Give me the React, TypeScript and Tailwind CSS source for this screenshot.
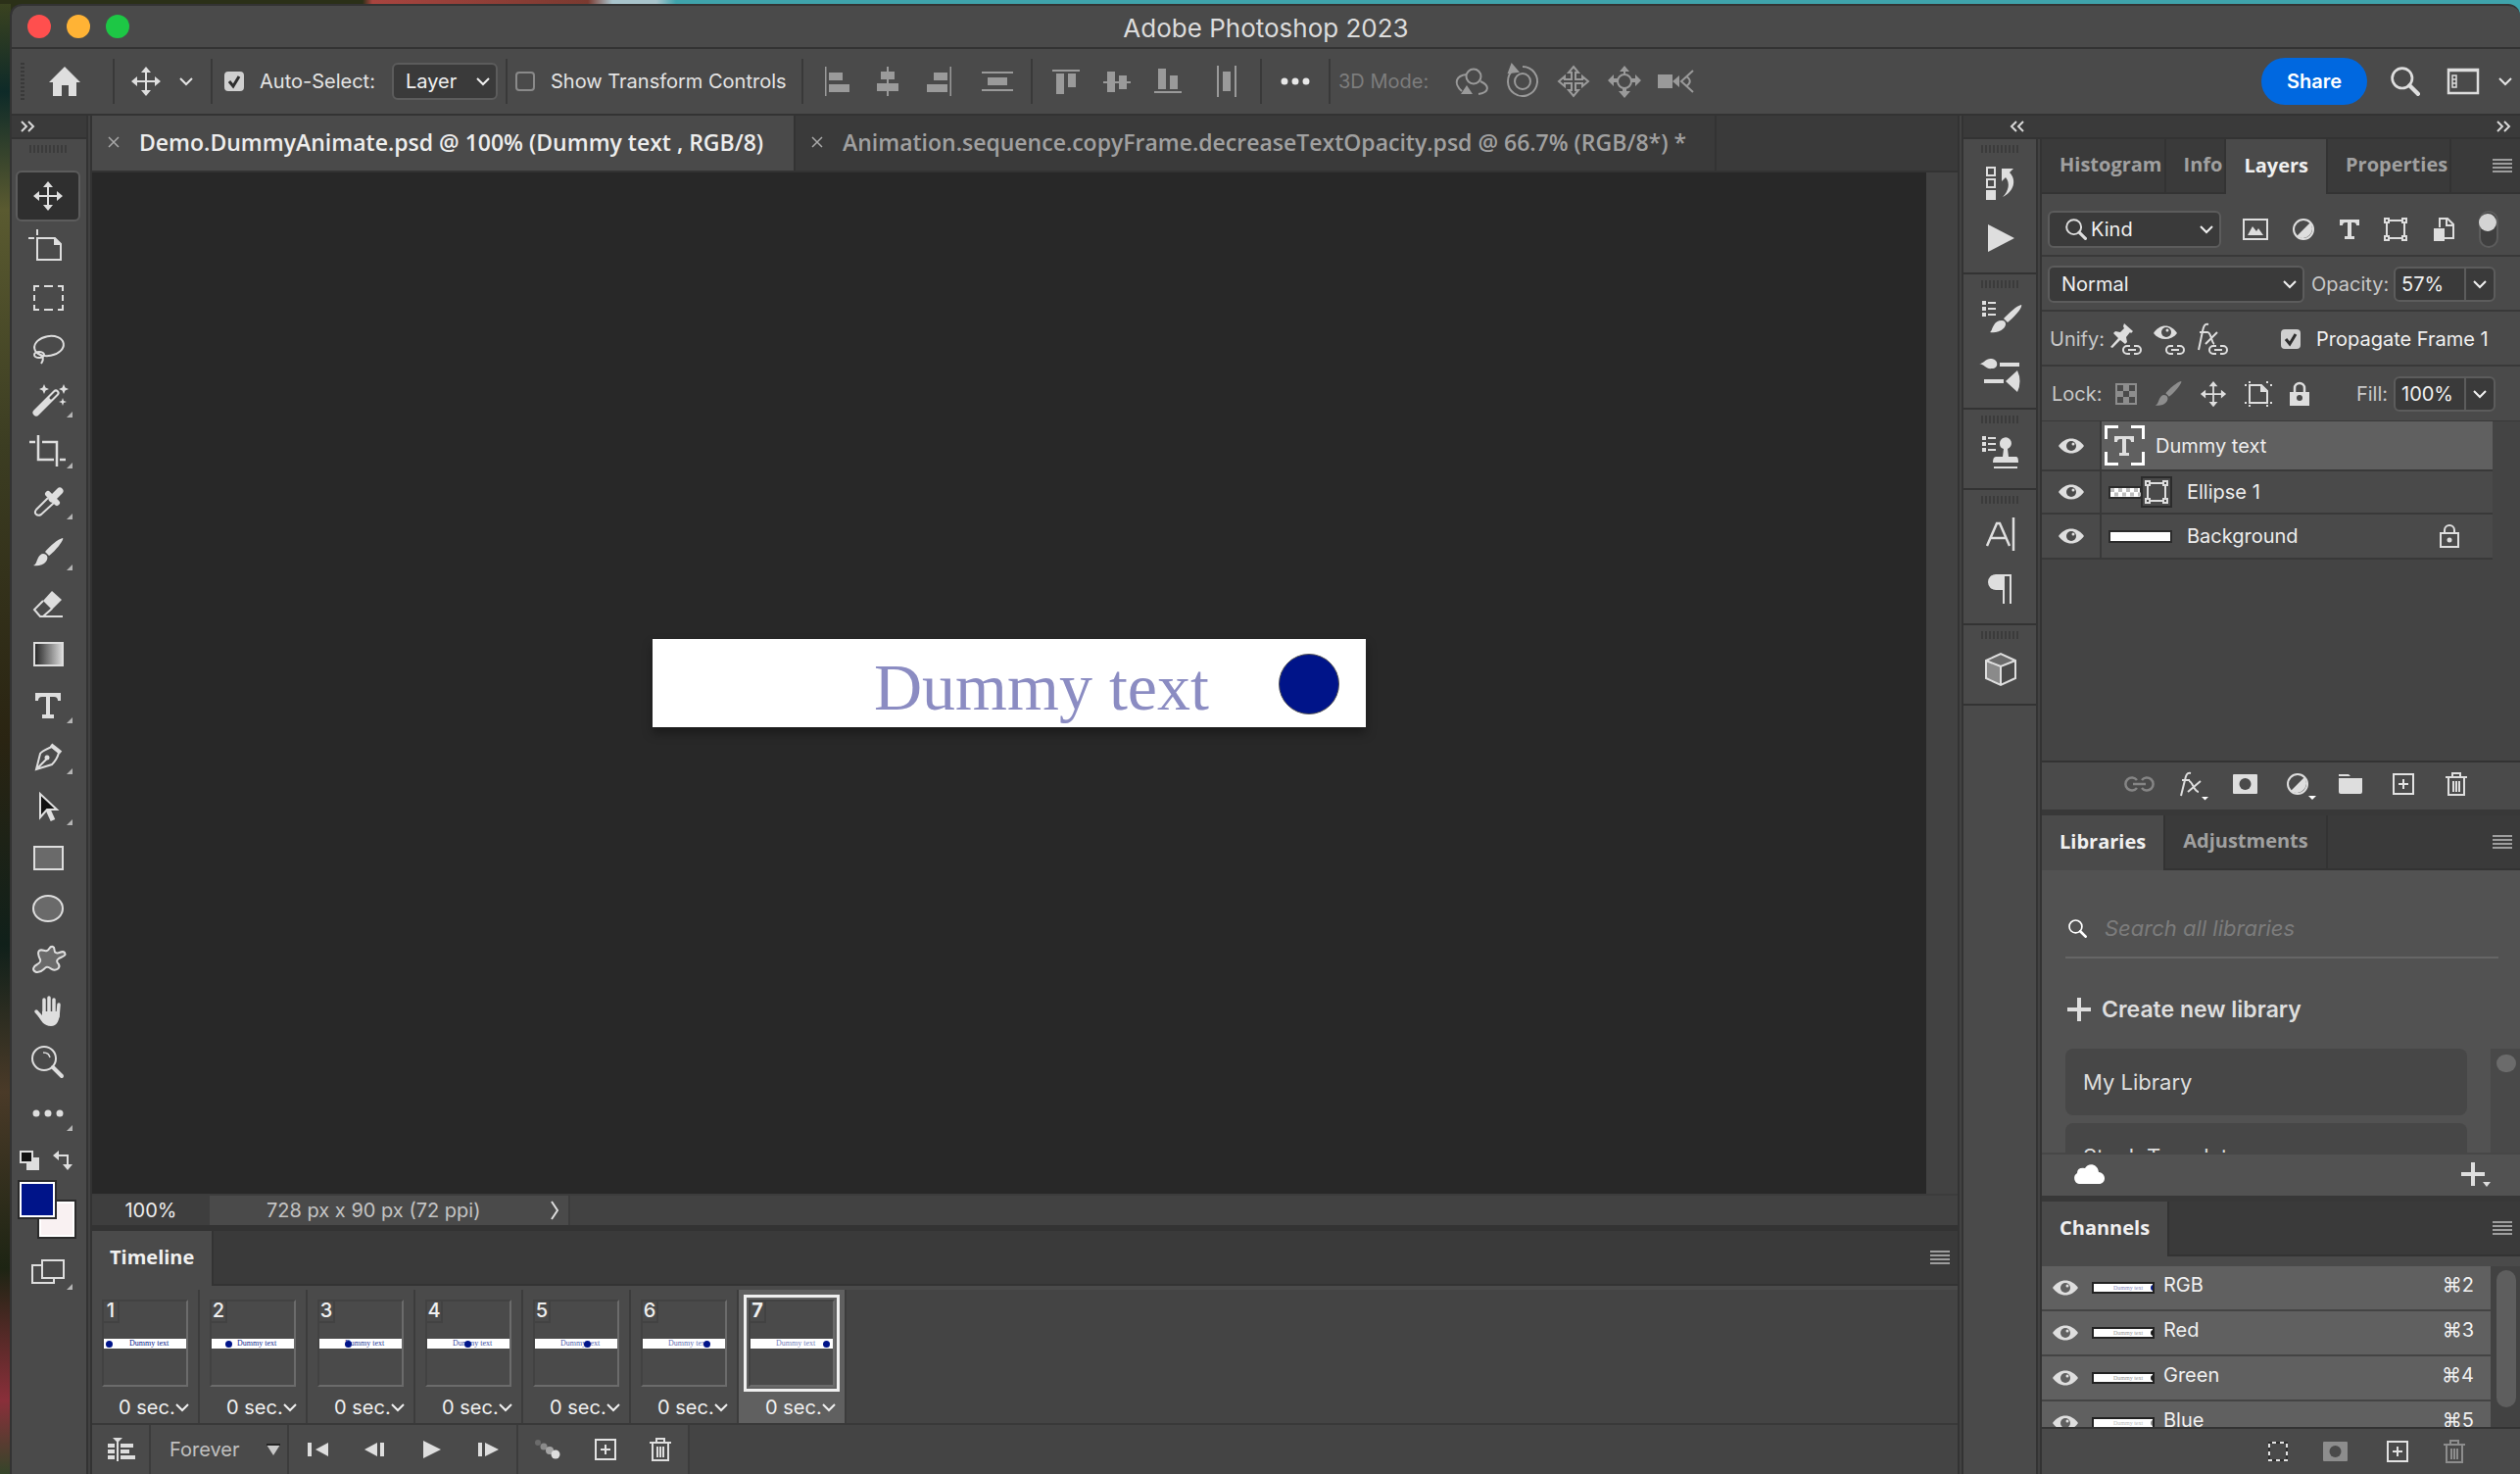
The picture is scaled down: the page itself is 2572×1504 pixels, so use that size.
import type { ReactNode } from "react";

type IconProps = {
  w?: number,
  h?: number,
  className?: string,
  children: ReactNode
}

function Icon({ w = 36, h = 36, className = "", children }: IconProps) {
  return (
    <svg width={w} height={h} viewBox={`0 0 ${w} ${h}`} fill="none" stroke="none" aria-hidden="true" className={`shrink-0 overflow-visible ${className}`}>
      {children}
    </svg>
  )
}

const MOVE = "M18 3l5 6h-4v8h8v-4l6 5-6 5v-4h-8v8h4l-5 6-5-6h4v-8H9v4l-6-5 6-5v4h8V9h-4z"
const SERIF_T = "M5 5h26v8h-3q0-4-4-4h-4v18h4v4H12v-4h4V9h-4q-4 0-4 4H5z"
const BRUSH_HANDLE = "M33 3c2 1-7 13-14 18l-4-4C20 11 28 4 33 3z"
const BRUSH_TIP = "M13 19c4 0 6 4 3 8-3 4-9 5-13 4 3-1 3-4 5-8 1-2 3-4 5-4z"

function Chevron({ className = "" }: { className?: string }) {
  return (
    <Icon w={14} h={8} className={className}>
      <path d="M1 1l6 6 6-6" stroke="currentColor" strokeWidth="2" />
    </Icon>
  )
}

function DoubleChevron({ left = false }: { left?: boolean }) {
  return (
    <Icon w={14} h={10}>
      <path d={left ? "M6 0L1 5l5 5M13 0L8 5l5 5" : "M1 0l5 5-5 5M8 0l5 5-5 5"} stroke="#d8d8d8" strokeWidth="2" />
    </Icon>
  )
}

function Burger() {
  return (
    <button aria-label="Panel menu" className="shrink-0">
      <Icon w={20} h={14}>
        <path d="M0 1h20M0 5h20M0 9h20M0 13h20" stroke="#9d9d9d" strokeWidth="2" />
      </Icon>
    </button>
  )
}

function Grip() {
  return (
    <Icon w={38} h={8}>
      <path d="M1 0v8M5 0v8M9 0v8M13 0v8M17 0v8M21 0v8M25 0v8M29 0v8M33 0v8M37 0v8" stroke="#3b3b3b" strokeWidth="2" />
    </Icon>
  )
}

function Eye({ iris = "#4a4a4a" }: { iris?: string }) {
  return (
    <Icon w={26} h={16}>
      <path d="M0 8C7-2 19-2 26 8 19 18 7 18 0 8z" fill="#dedede" />
      <circle cx="13" cy="8" r="5" fill={iris} />
      <circle cx="15" cy="6" r="1.500" fill="#dedede" />
    </Icon>
  )
}

function Trash({ className = "text-[#dedede]" }: { className?: string }) {
  return (
    <Icon w={22} h={24} className={className}>
      <path d="M0 5h22M7 4V1h8v3M3 6v17h16V6M8 9v11M11 9v11M14 9v11" stroke="currentColor" strokeWidth="2" />
    </Icon>
  )
}

function PlusBox() {
  return (
    <Icon w={22} h={22}>
      <path d="M1 1h20v20H1zM11 6v10M6 11h10" stroke="#e2e2e2" strokeWidth="2" />
    </Icon>
  )
}

function MaskIcon({ className = "text-[#dedede]" }: { className?: string }) {
  return (
    <Icon w={25} h={20} className={className}>
      <rect width="25" height="20" rx="1" fill="currentColor" />
      <circle cx="12.500" cy="10" r="6" fill="#4a4a4a" />
    </Icon>
  )
}

function HalfCircle() {
  return (
    <Icon w={22} h={22}>
      <circle cx="11" cy="11" r="10" stroke="#dedede" strokeWidth="2" />
      <path d="M4 18A10 10 0 0 0 18 4z" fill="#dedede" />
    </Icon>
  )
}

function Magnifier({ w = 28, white = false }: { w?: number, white?: boolean }) {
  return (
    <svg width={w} height={w} viewBox="0 0 28 28" fill="none" stroke={white ? "#fff" : "#dedede"} aria-hidden="true" className="shrink-0">
      <circle cx="11" cy="11" r="9.500" strokeWidth="2.500" />
      <path d="M18 18l8 8" strokeWidth="4" strokeLinecap="round" />
    </svg>
  )
}

function VectorMask() {
  return (
    <Icon w={24} h={24}>
      <path d="M5 3h14M5 21h14M3 5v14M21 5v14" stroke="#dedede" strokeWidth="2" />
      <path d="M1 1h4v4H1zM19 1h4v4h-4zM1 19h4v4H1zM19 19h4v4h-4z" stroke="#dedede" strokeWidth="2" />
    </Icon>
  )
}

function LinkBadge() {
  return <path d="M20 25h-3a3.500 3.500 0 0 0 0 8h3M24 25h3a3.500 3.500 0 0 1 0 8h-3M18 29h8" stroke="#dedede" strokeWidth="2" />
}

function Checkbox({ id, checked = false }: { id: string, checked?: boolean }) {
  return (
    <span className="grid size-5 shrink-0 place-items-center *:col-start-1 *:row-start-1">
      <input id={id} type="checkbox" defaultChecked={checked} className="peer size-5 appearance-none rounded border-2 border-[#8a8a8a] checked:border-[#d0d0d0] checked:bg-[#d0d0d0]" />
      <Icon w={14} h={14} className="pointer-events-none opacity-0 peer-checked:opacity-100">
        <path d="M2 7l4 5 6-10" stroke="#2e2e2e" strokeWidth="3" />
      </Icon>
    </span>
  )
}

type DropdownProps = {
  label: string,
  value: string,
  className: string,
  children?: ReactNode
}

function Dropdown({ label, value, className, children }: DropdownProps) {
  return (
    <div className={`relative flex h-[38px] items-center rounded-md border-2 border-[#5c5c5c] bg-[#3a3a3a] text-[#f0f0f0] ${className}`}>
      {children}
      <select aria-label={label} className="h-full w-full appearance-none bg-transparent outline-none">
        <option>{value}</option>
      </select>
      <Chevron className="pointer-events-none absolute right-1.5" />
    </div>
  )
}

function NumberBox({ id, value }: { id: string, value: string }) {
  return (
    <div className="flex h-9 w-[104px] shrink-0 rounded-md border-2 border-[#5c5c5c] bg-[#3a3a3a] text-[#f0f0f0]">
      <input id={id} defaultValue={value} className="w-[72px] border-r-2 border-[#5c5c5c] bg-transparent pl-1.5 outline-none" />
      <button aria-label="Open slider" className="grid flex-1 place-items-center"><Chevron /></button>
    </div>
  )
}

function Rule() {
  return <span className="h-[46px] w-0.5 shrink-0 bg-[#393939]" />
}

function AlignButton({ label, d, w, wide = false }: { label: string, d: string, w: number, wide?: boolean }) {
  return (
    <button aria-label={label} className={`grid shrink-0 place-items-center ${wide ? "w-[68px]" : "w-[52px]"}`}>
      <Icon w={w} h={32}><path d={d} fill="#9a9a9a" /></Icon>
    </button>
  )
}

const modes3d = [
  {
    label: "Orbit",
    icon: <>
      <circle cx="20" cy="13" r="7.500" /><path d="M13 11C2 12-1 20 8 28M27 18c9 4 10 11-2 13" />
      <path d="M7 31l6-9 6 9z" fill="#9a9a9a" stroke="none" />
    </>
  },
  {
    label: "Roll",
    icon: <>
      <circle cx="18" cy="18" r="8" /><path d="M9 6a15 15 0 1 0 9-3" /><path d="M4 9l3-8 6 7z" fill="#9a9a9a" />
    </>
  },
  {
    label: "Pan",
    icon: <path d="M18 3l5 6h-3v7h7v-3l6 5-6 5v-3h-7v7h3l-5 6-5-6h3v-7H9v3l-6-5 6-5v3h7V9h-3z" />
  },
  {
    label: "Slide",
    icon: <>
      <circle cx="18" cy="18" r="7" />
      <path d="M18 2l5 6h-4v4h-2V8h-4zM18 35l6-7h-4v-4h-4v4h-4zM1 17l6-6v4h4v4H7v4zM35 17l-6-6v4h-4v4h4v4z" fill="#9a9a9a" stroke="none" />
    </>
  },
  {
    label: "Camera",
    icon: <>
      <path d="M0 11h15v14H0zM15 18l7-6v12z" fill="#9a9a9a" stroke="none" /><path d="M36 7L24 18l12 11M29 13c5 3 5 7 0 10" />
    </>
  },
]

function OptionsBar() {
  return (
    <div className="flex h-[68px] shrink-0 items-center border-b-2 border-[#333] text-[#e4e4e4]">
      <Icon w={4} h={38} className="ml-[9px]">
        <path d="M2 0v38" stroke="#393939" strokeWidth="4" strokeDasharray="2 2" />
      </Icon>
      <button aria-label="Home" className="mr-8 ml-6">
        <Icon w={34} h={32}><path d="M17 1L1 17h4v14h9V20h7v11h8V17h4z" fill="#dedede" /></Icon>
      </button>
      <Rule />
      <button aria-label="Move tool options" className="flex w-[98px] items-center gap-4 pl-3.5">
        <Icon><path d={MOVE} fill="#dedede" /></Icon>
        <Chevron />
      </button>
      <Rule />
      <label htmlFor="auto-select" className="ml-3 flex w-[171px] shrink-0 items-center gap-4 whitespace-nowrap">
        <Checkbox id="auto-select" checked /> Auto-Select:
      </label>
      <Dropdown label="Auto-select target" value="Layer" className="mr-2 w-[108px] shrink-0 pl-3" />
      <Rule />
      <label htmlFor="transform" className="ml-2 flex w-[292px] shrink-0 items-center gap-4 whitespace-nowrap">
        <Checkbox id="transform" /> Show Transform Controls
      </label>
      <Rule />
      <div className="ml-2 flex shrink-0">
        <AlignButton label="Align left edges" w={25} d="M0 1h1.500v30H0zM4 7h14v8H4zM4 19h21v8H4z" />
        <AlignButton label="Align horizontal centers" w={22} d="M10 1h2v30h-2zM4 6h14v8H4zM0 18h22v8H0z" />
        <AlignButton label="Align right edges" w={25} d="M23.500 1H25v30h-1.500zM7 7h14v8H7zM0 19h21v8H0z" />
        <AlignButton label="Distribute vertically" w={32} wide d="M0 6h32v2H0zM6 12h20v8H6zM0 24h32v2H0z" />
      </div>
      <Rule />
      <div className="ml-2 flex shrink-0">
        <AlignButton label="Align top edges" w={28} d="M0 4h28v2H0zM4 8h8v21H4zM16 8h8v14h-8z" />
        <AlignButton label="Align vertical centers" w={28} d="M0 16h28v2H0zM4 6h8v21H4zM16 10h8v14h-8z" />
        <AlignButton label="Align bottom edges" w={28} d="M0 26h28v2H0zM4 3h8v21H4zM16 10h8v14h-8z" />
        <AlignButton label="Distribute horizontally" w={20} wide d="M0 0h2v32H0zM6 6h8v20H6zM18 0h2v32h-2z" />
      </div>
      <Rule />
      <button aria-label="Align and distribute" className="grid w-[68px] shrink-0 place-items-center">
        <Icon w={30} h={8}><path d="M4 4h0M15 4h0M26 4h0" stroke="#e8e8e8" strokeWidth="7" strokeLinecap="round" /></Icon>
      </button>
      <Rule />
      <span className="ml-2 w-[110px] shrink-0 whitespace-nowrap text-[#7d7d7d]">3D Mode:</span>
      <div className="flex shrink-0">
        {modes3d.map(mode => (
          <button key={mode.label} aria-label={mode.label} className="grid w-[52px] place-items-center">
            <Icon><g stroke="#9a9a9a" strokeWidth="2">{mode.icon}</g></Icon>
          </button>
        ))}
      </div>
      <button className="ml-auto h-12 w-[108px] shrink-0 rounded-full bg-[#0068e0] font-semibold text-white">Share</button>
      <button aria-label="Search" className="ml-6"><Magnifier w={30} /></button>
      <button aria-label="Workspace" className="ml-7 flex items-center gap-5 pr-2">
        <Icon w={32} h={26}>
          <path d="M1 1h30v24H1zM1 2h30" stroke="#dedede" strokeWidth="2.500" />
          <path d="M5 7h4v4H5zM5 11h4v4H5zM5 15h4v4H5z" stroke="#dedede" strokeWidth="1.500" />
        </Icon>
        <Chevron />
      </button>
    </div>
  )
}

const tools: { label: string, more?: boolean, icon: ReactNode }[] = [
  { label: "Move", icon: <path d={MOVE} fill="#dedede" /> },
  {
    label: "Artboard",
    icon: <>
      <path d="M7 9h18l6 6v16H7zM-2 9h6M7 0v6" stroke="#dedede" strokeWidth="2" /><path d="M24 8v8h8z" fill="#dedede" />
    </>
  },
  { label: "Marquee", icon: <path d="M4 11V6h5M14 6h9M28 6h5v5M33 15v6M33 25v5h-5M23 30h-9M9 30H4v-5M4 21v-6" stroke="#dedede" strokeWidth="2" /> },
  {
    label: "Lasso",
    icon: <g stroke="#dedede" strokeWidth="2">
      <ellipse cx="19" cy="15" rx="15" ry="10" transform="rotate(-10 19 15)" />
      <ellipse cx="9" cy="24" rx="5" ry="3" /><path d="M7 22c5 3 8 5 4 11" />
    </g>
  },
  {
    label: "Magic wand", more: true,
    icon: <>
      <path d="M6 31L26 11" stroke="#dedede" strokeWidth="7" strokeLinecap="round" />
      <path d="M21 16l5-5" stroke="#4a4a4a" strokeWidth="3" strokeLinecap="round" />
      <path d="M14 2l1.500 3.500L19 7l-3.500 1.500L14 12l-1.500-3.500L9 7l3.500-1.500zM34 2l1.500 3.500L39 7l-3.500 1.500L34 12l-1.500-3.500L29 7l3.500-1.500zM33 16l1 3 3 1-3 1-1 3-1-3-3-1 3-1z" fill="#dedede" />
    </>
  },
  { label: "Crop", more: true, icon: <path d="M8 2v25h16M12 9h15v25M-1 9h6M30 27h6" stroke="#dedede" strokeWidth="2.500" /> },
  {
    label: "Eyedropper", more: true,
    icon: <>
      <path d="M18 14L6 26c-3 4 1 7 5 5l13-12" stroke="#dedede" strokeWidth="2" />
      <path d="M18 10l9 9" stroke="#dedede" strokeWidth="6" strokeLinecap="round" />
      <path d="M22 15l8-8" stroke="#dedede" strokeWidth="7" strokeLinecap="round" />
    </>
  },
  { label: "Brush", more: true, icon: <><path d={BRUSH_HANDLE} fill="#dedede" /><path d={BRUSH_TIP} fill="#dedede" /></> },
  {
    label: "Eraser",
    icon: <>
      <path d="M13 15l9-10 10 9-10 10z" fill="#dedede" /><path d="M13 15l-9 9 6 7h3l9-8M10 31h23" stroke="#dedede" strokeWidth="2" />
    </>
  },
  {
    label: "Gradient",
    icon: <>
      <defs><linearGradient id="ramp"><stop stopColor="#222" /><stop offset="1" stopColor="#dcdcdc" /></linearGradient></defs>
      <rect x="4" y="6" width="29" height="23" fill="url(#ramp)" stroke="#dedede" strokeWidth="2" />
    </>
  },
  { label: "Type", more: true, icon: <path d={SERIF_T} fill="#dedede" /> },
  {
    label: "Pen", more: true,
    icon: <>
      <path d="M6 31l4-16c1-2 9-6 12-7l7 6c-1 4-4 9-7 12zM6 31l11-11" stroke="#dedede" strokeWidth="2" />
      <circle cx="17" cy="19" r="2.500" fill="#dedede" /><path d="M21 6l10 8" stroke="#dedede" strokeWidth="4" />
    </>
  },
  {
    label: "Path selection", more: true,
    icon: <>
      <path d="M18 20l5 11" stroke="#dedede" strokeWidth="5" /><path d="M10 4v24l7-8h10z" fill="#111" stroke="#dedede" strokeWidth="2" />
    </>
  },
  { label: "Rectangle", icon: <rect x="4" y="6" width="29" height="23" fill="#6a6a6a" stroke="#dedede" strokeWidth="2" /> },
  { label: "Ellipse", icon: <ellipse cx="18" cy="17" rx="15" ry="13" fill="#6a6a6a" stroke="#dedede" strokeWidth="2" /> },
  {
    label: "Custom shape",
    icon: <path d="M9 8c3-2 5 1 8 0s2-5 6-4c3 1 0 5 3 6 3 2 6-3 9 0 2 3-2 4-6 6-3 2-2 4 0 6 2 4-3 7-7 5-3-2-4-3-6-2-3 2-5 6-10 5-5-2-3-6 1-8 3-2 4-3 3-5-2-4-3-7-1-9z" fill="#6a6a6a" stroke="#dedede" strokeWidth="2" />
  },
  {
    label: "Hand",
    icon: <>
      <path d="M14 6v15M19 4v16M24 6v15M29 11l-1 12M6 18l8 9" stroke="#dedede" strokeWidth="3.500" strokeLinecap="round" />
      <path d="M12 18h18c0 9-3 15-9 15-7 0-10-5-14-12l5 2z" fill="#dedede" />
    </>
  },
  {
    label: "Zoom",
    icon: <>
      <circle cx="14" cy="14" r="12" stroke="#dedede" strokeWidth="2" /><path d="M13 8c5 0 6 2 7 5" stroke="#dedede" strokeWidth="1.500" />
      <path d="M23 23l9 9" stroke="#dedede" strokeWidth="4" strokeLinecap="round" />
    </>
  },
  { label: "More tools", more: true, icon: <path d="M6 18h0M18 18h0M30 18h0" stroke="#dedede" strokeWidth="7" strokeLinecap="round" /> },
]

function MoreMark() {
  return (
    <Icon w={6} h={6} className="absolute right-2 bottom-2"><path d="M6 0v6H0z" fill="#b5b5b5" /></Icon>
  )
}

function Toolbar() {
  return (
    <aside className="flex w-[76px] shrink-0 flex-col bg-[#4a4a4a]">
      <div className="flex h-6 shrink-0 items-center border-b-2 border-[#333] bg-[#3a3a3a] pl-[9px]"><DoubleChevron /></div>
      <div className="mt-1.5 mb-[18px] ml-[18px]"><Grip /></div>
      <div className="flex flex-col pl-1">
        {tools.map((tool, i) => (
          <button key={tool.label} aria-label={tool.label} className={`relative grid h-[52px] w-[66px] shrink-0 place-items-center rounded-md ${i === 0 ? "border-2 border-[#5c5c5c] bg-[#2f2f2f]" : ""}`}>
            <Icon>{tool.icon}</Icon>
            {tool.more && <MoreMark />}
          </button>
        ))}
      </div>
      <div className="mt-3 flex items-center justify-between pr-3.5 pl-2">
        <button aria-label="Default colors">
          <Icon w={20} h={20}>
            <path d="M7 7h13v13H7z" fill="#dedede" /><path d="M1 1h12v11H1z" fill="#111" stroke="#dedede" strokeWidth="2" />
          </Icon>
        </button>
        <button aria-label="Swap colors">
          <Icon w={20} h={20}>
            <path d="M5 5h10v10" stroke="#dedede" strokeWidth="2" /><path d="M0 5l6-5v10zM15 20l-5-6h10z" fill="#dedede" />
          </Icon>
        </button>
      </div>
      <div className="relative mt-2.5 ml-1.5 size-15 shrink-0">
        <button aria-label="Background color" className="absolute right-0 bottom-0 size-10 border-2 border-[#2b2b2b] bg-[#f9f1f2] ring-2 ring-white ring-inset" />
        <button aria-label="Foreground color" className="absolute top-0 left-0 size-10 border-2 border-[#2b2b2b] bg-[#001489] ring-2 ring-white ring-inset" />
      </div>
      <button aria-label="Screen mode" className="relative mt-2 ml-1 grid h-[52px] w-[66px] place-items-center">
        <Icon w={34} h={26}><path d="M11 6H1v18h22v-4M11 1h22v18H11z" stroke="#dedede" strokeWidth="2" /></Icon>
        <MoreMark />
      </button>
    </aside>
  )
}

function Divider() {
  return <div className="w-1.5 shrink-0 border-x-2 border-[#333] bg-[#424242]" />
}

function CloseX() {
  return (
    <Icon w={12} h={12}><path d="M1 1l10 10M11 1L1 11" stroke="#a8a8a8" strokeWidth="1.500" /></Icon>
  )
}

function DocumentTabs() {
  return (
    <div role="tablist" className="flex h-[58px] shrink-0 border-b-2 border-[#333] bg-[#3a3a3a] font-['Open_Sans',sans-serif] text-[23px] font-semibold whitespace-nowrap">
      <div className="flex w-[718px] items-center gap-5 border-r-2 border-[#333] bg-[#4a4a4a] pb-0.5 pl-4">
        <button aria-label="Close first document"><CloseX /></button>
        <button role="tab" aria-selected="true" className="text-[#ededed]">Demo.DummyAnimate.psd @ 100% (Dummy text , RGB/8)</button>
      </div>
      <div className="flex w-[940px] items-center gap-5 border-r-2 border-[#333] pb-0.5 pl-4">
        <button aria-label="Close second document"><CloseX /></button>
        <button role="tab" aria-selected="false" className="text-[#a0a0a0]">Animation.sequence.copyFrame.decreaseTextOpacity.psd @ 66.7% (RGB/8*) *</button>
      </div>
    </div>
  )
}

const frames = [
  { dot: 2, opacity: 1 },
  { dot: 14, opacity: 0.93 },
  { dot: 26, opacity: 0.86 },
  { dot: 38, opacity: 0.79 },
  { dot: 50, opacity: 0.71 },
  { dot: 62, opacity: 0.64 },
  { dot: 74, opacity: 0.57 },
]

function Frame({ index, dot, opacity }: { index: number, dot: number, opacity: number }) {
  const active = index === 7
  return (
    <li className={`flex w-[110px] shrink-0 flex-col items-center border-r-2 border-[#3c3c3c] ${active ? "bg-[#606060]" : "bg-[#4a4a4a]"}`}>
      <button aria-label={`Frame ${index}`} className={`mt-[5px] border-[3px] ${active ? "border-[#f0f0f0]" : "border-transparent"}`}>
        <span className="m-0.5 flex h-[89px] w-[88px] flex-col border-2 border-t-[#424242] border-r-[#6b6b6b] border-b-[#6b6b6b] border-l-[#424242] bg-[#4a4a4a]">
          <span className={`flex h-[22px] w-[16px] items-center justify-center border-r-2 border-b-2 border-[#424242] pb-0.5 text-[20px] text-[#f0f0f0] ${active ? "font-bold" : "font-medium"}`}>{index}</span>
          <span className="relative mt-4 flex h-2.5 items-center bg-white pl-[26px] font-['Liberation_Serif',serif] text-[8px] whitespace-nowrap text-[#001489]">
            <span style={{ opacity }}>Dummy text</span>
            <span className="absolute size-[7px] rounded-full bg-[#001489]" style={{ left: dot }} />
          </span>
        </span>
      </button>
      <div className="relative mt-0.5 ml-[18px] flex h-7 w-[72px] items-center text-[#f0f0f0]">
        <select aria-label={`Frame ${index} delay`} className="w-full appearance-none bg-transparent outline-none">
          <option>0 sec.</option>
        </select>
        <Chevron className="pointer-events-none absolute right-0" />
      </div>
    </li>
  )
}

const transport = [
  { label: "First frame", d: "M0 3h4v14H0zM21 3v14L8 10z" },
  { label: "Previous frame", d: "M13 3v14L0 10zM16 3h4v14h-4z" },
  { label: "Play", d: "M2 1v18l18-9z" },
  { label: "Next frame", d: "M0 3h4v14H0zM7 3v14l14-7z" },
]

function Timeline() {
  return (
    <section className="flex shrink-0 flex-col border-t-[6px] border-[#333] bg-[#444]">
      <PanelTabs tabs={["Timeline"]} active="Timeline" />
      <div className="h-1 bg-[#4a4a4a]" />
      <ol className="flex h-[138px] border-b-2 border-[#393939]">
        {frames.map((frame, i) => <Frame key={i} index={i + 1} {...frame} />)}
      </ol>
      <div className="flex h-[50px]">
        <div className="flex bg-[#4a4a4a] *:border-r-2 *:border-[#3c3c3c]">
          <button aria-label="Convert to video timeline" className="grid w-[60px] place-items-center pl-0.5">
            <Icon w={28} h={24}>
              <path d="M0 6h7v4H0zM0 12h7v4H0zM0 18h7v4H0zM13 6h13v4H13zM13 12h9v4h-9zM13 18h15v4H13zM9 1h2v23H9zM5 0h10l-5 5z" fill="#dedede" />
            </Icon>
          </button>
          <div className="relative flex w-[141px] items-center pl-[19px] text-[#c0c0c0]">
            <select aria-label="Looping" className="w-full appearance-none bg-transparent outline-none"><option>Forever</option></select>
            <Icon w={14} h={11} className="pointer-events-none absolute right-[7px]">
              <path d="M0 0h14L7 11z" fill="#c8c8c8" /><path d="M0 0h14" stroke="#222" strokeWidth="2" />
            </Icon>
          </div>
          <div className="flex w-[234px] items-center justify-around">
            {transport.map(t => (
              <button key={t.label} aria-label={t.label}><Icon w={21} h={20}><path d={t.d} fill="#dedede" /></Icon></button>
            ))}
          </div>
          <div className="flex w-[175px] items-center justify-between px-[17px]">
            <button aria-label="Tween">
              <Icon w={26} h={20}>
                <circle cx="3" cy="3" r="3" fill="#6b6b6b" /><circle cx="9" cy="7" r="3.500" fill="#8a8a8a" />
                <circle cx="15" cy="11" r="4" fill="#a5a5a5" /><circle cx="21" cy="15" r="4.500" fill="#dedede" />
              </Icon>
            </button>
            <button aria-label="Duplicate frame"><PlusBox /></button>
            <button aria-label="Delete frame"><Trash /></button>
          </div>
        </div>
      </div>
    </section>
  )
}

function PanelTabs({ tabs, active, clipped = false }: { tabs: string[], active: string, clipped?: boolean }) {
  return (
    <div className="flex h-14 shrink-0 bg-[#3a3a3a] font-['Open_Sans',sans-serif] text-[20px] font-bold">
      <div role="tablist" className="flex">
        {tabs.map(tab => (
          <button
            key={tab}
            role="tab"
            aria-selected={tab === active}
            className={`border-r-2 border-[#333] pb-0.5 whitespace-nowrap ${clipped && tab !== active ? "pr-0.5 pl-[18px]" : "px-[18px]"} ${tab === active ? "bg-[#4a4a4a] text-[#f0f0f0]" : "border-b-2 text-[#a0a0a0]"}`}
          >
            {tab}
          </button>
        ))}
      </div>
      <div className="flex flex-1 items-center justify-end border-b-2 border-[#333] pr-2"><Burger /></div>
    </div>
  )
}

function Workspace() {
  return (
    <main className="flex min-w-0 flex-1 flex-col">
      <DocumentTabs />
      <div className="flex min-h-0 flex-1">
        <div className="grid flex-1 place-items-center bg-[#282828]">
          <div className="relative flex h-[90px] w-[728px] items-center bg-white shadow-[0_6px_10px_rgba(0,0,0,0.35)]">
            <span className="pt-2 pl-[226px] font-['Liberation_Serif',serif] text-[68px] whitespace-nowrap text-[#8b8cc2]">Dummy text</span>
            <span className="absolute top-[15px] right-[27px] size-[62px] rounded-full border border-[#555] bg-[#001489]" />
          </div>
        </div>
        <div className="w-8 bg-[#424242]" />
      </div>
      <div className="flex h-8 shrink-0 border-t-2 border-[#3c3c3c] bg-[#424242]">
        <label className="flex w-[120px] bg-[#3e3e3e]">
          <input aria-label="Zoom level" defaultValue="100%" className="w-full bg-transparent text-center text-[#ededed] outline-none" />
        </label>
        <button className="flex w-[368px] items-center justify-between border-r-2 border-[#3c3c3c] bg-[#4a4a4a] pr-2.5 pl-[58px] text-[#c4c4c4]">
          728 px x 90 px (72 ppi)
          <Icon w={8} h={18}><path d="M1 0l6 9-6 9" stroke="#dedede" strokeWidth="2" /></Icon>
        </button>
      </div>
      <Timeline />
    </main>
  )
}

const listMark = "M0 0h4v4H0zM0 6h4v4H0zM0 12h4v4H0zM6 1h8v2H6zM6 7h8v2H6zM6 13h8v2H6z"

const dock: { label: string, icon: ReactNode }[][] = [
  [
    {
      label: "History",
      icon: <>
        <path d="M5 2h8v8H5zM5 14h8v8H5z" stroke="#dedede" strokeWidth="2" /><path d="M4 25h10v10H4z" fill="#dedede" />
        <path d="M20 3h12l-4 4c8 8 4 20-7 25 6-6 8-14 3-20l-4 4z" fill="#dedede" />
      </>
    },
    { label: "Actions", icon: <path d="M6 4v28l27-14z" fill="#dedede" /> },
  ],
  [
    {
      label: "Brush settings",
      icon: <>
        <path d={listMark} fill="#dedede" />
        <path d="M40 4c2 2-7 13-14 18l-4-4C28 12 35 5 40 4zM20 20c5 0 5 5 2 8-4 4-10 5-14 4 3-2 3-12 12-12z" fill="#dedede" />
      </>
    },
    {
      label: "Brushes",
      icon: <path d="M-3 8c5 0 7-6 13-5 7 1 7 10 0 10C4 14 3 9-3 8zM18 7h20v4H18zM2 24h20v4H2zM24 26L36 15q5 11 0 22z" fill="#dedede" />
    },
  ],
  [
    {
      label: "Clone source",
      icon: <>
        <path d={listMark} fill="#dedede" />
        <path d="M18 8a6 6 0 1 1 8 5l1 8h8q2 0 2 6H11q0-6 3-6h7l1-8q-4-1-4-5zM12 31h24v2H12z" fill="#dedede" />
      </>
    },
  ],
  [
    { label: "Character", icon: <path d="M5 30L15 7h3l10 23M9 22h15M32 1v34" stroke="#dedede" strokeWidth="2.500" /> },
    { label: "Paragraph", icon: <path d="M30 3H14a8 8 0 0 0 0 16h7v14h2V5h5v28h2z" fill="#dedede" /> },
  ],
  [
    {
      label: "3D",
      icon: <>
        <path d="M4 9l15 6v19L4 27z" fill="#8a8a8a" /><path d="M4 9l15-7 15 7-15 6z" fill="#6b6b6b" />
        <path d="M4 9l15-7 15 7v18l-15 7-15-7zM4 9l15 6 15-6M19 15v19" stroke="#dedede" strokeWidth="2" />
      </>
    },
  ],
]

function Dock() {
  return (
    <nav aria-label="Collapsed panels" className="w-[74px] shrink-0 bg-[#4a4a4a]">
      {dock.map((group, i) => (
        <div key={i} className="flex flex-col items-center border-b-2 border-[#333] pt-1.5 pb-[7px]">
          <div className="mb-[3px]"><Grip /></div>
          {group.map(item => (
            <button key={item.label} aria-label={item.label} className="grid h-14 w-full place-items-center"><Icon>{item.icon}</Icon></button>
          ))}
        </div>
      ))}
    </nav>
  )
}

function LayersPanel() {
  return (
    <section className="flex min-h-0 flex-1 flex-col bg-[#4a4a4a]">
      <PanelTabs tabs={["Histogram", "Info", "Layers", "Properties"]} active="Layers" clipped />
      <div className="flex h-16 shrink-0 items-center border-b-2 border-[#393939] px-1.5 pt-2.5">
        <Dropdown label="Filter type" value="Kind" className="w-[177px] gap-1 pl-4"><Magnifier w={22} /></Dropdown>
        <div className="flex flex-1 items-center justify-between pr-4 pl-[22px]">
          <button aria-label="Pixel layers">
            <Icon w={26} h={22}><path d="M1 1h24v20H1z" stroke="#dedede" strokeWidth="2" /><path d="M5 17l5-9 4 5 2-3 5 7z" fill="#dedede" /></Icon>
          </button>
          <button aria-label="Adjustment layers"><HalfCircle /></button>
          <button aria-label="Type layers">
            <Icon w={20} h={20}><path d="M0 0h20v6h-3q0-3-3-3h-2v14h3v3H5v-3h3V3H6Q3 3 3 6H0z" fill="#dedede" /></Icon>
          </button>
          <button aria-label="Shape layers"><VectorMask /></button>
          <button aria-label="Smart objects">
            <Icon w={22} h={24}><path d="M7 10V1h8l6 6v14h-9M14 1v7h7" stroke="#dedede" strokeWidth="2" /><path d="M1 11h11v13H1z" fill="#dedede" /></Icon>
          </button>
          <button aria-label="Toggle filtering" className="h-[38px] w-5 rounded-full border-2 border-[#5c5c5c] bg-[#3f3f3f]">
            <span className="-m-0.5 -mt-4 block size-[18px] rounded-full bg-[#d4d4d4]" />
          </button>
        </div>
      </div>
      <div className="flex h-14 shrink-0 items-center border-b-2 border-[#393939] pt-0.5 pl-1.5">
        <Dropdown label="Blend mode" value="Normal" className="w-[262px] pl-3" />
        <label htmlFor="opacity" className="w-[91px] pl-[7px] whitespace-nowrap text-[#c8c8c8]">Opacity:</label>
        <NumberBox id="opacity" value="57%" />
      </div>
      <div className="flex h-14 shrink-0 items-center border-b-2 border-[#393939] pt-0.5 pl-2">
        <span className="w-[62px] text-[#c8c8c8]">Unify:</span>
        <div className="flex w-[174px] gap-2">
          <button aria-label="Unify position">
            <Icon>
              <path d="M14 2l9 8-2 2-1-1-4 5 1 5-2 2-5-4-8 8-2-1 8-9-5-5 2-2 5 1 4-4-1-2z" fill="#dedede" /><LinkBadge />
            </Icon>
          </button>
          <button aria-label="Unify visibility">
            <Icon>
              <path d="M0 12C6 2 18 2 24 12 18 20 6 20 0 12z" fill="#dedede" /><circle cx="13" cy="11" r="5" fill="#4a4a4a" />
              <circle cx="14" cy="9" r="1.500" fill="#dedede" /><LinkBadge />
            </Icon>
          </button>
          <button aria-label="Unify style">
            <Icon>
              <path d="M12 3c-4-1-5 2-6 7L2 29M3 11h8M11 11c4 0 4 11 7 12M21 11L9 23" stroke="#dedede" strokeWidth="2" /><LinkBadge />
            </Icon>
          </button>
        </div>
        <label htmlFor="propagate" className="flex items-center gap-4 whitespace-nowrap text-[#f0f0f0]">
          <Checkbox id="propagate" checked /> Propagate Frame 1
        </label>
      </div>
      <div className="flex h-[55px] shrink-0 items-center pl-2.5">
        <span className="w-[65px] text-[#c8c8c8]">Lock:</span>
        <div className="flex w-[198px] shrink-0 items-center justify-between">
          <button aria-label="Lock transparent pixels">
            <Icon w={22} h={22}>
              <path d="M1 1h20v20H1z" stroke="#8d8d8d" strokeWidth="2" />
              <path d="M8 2h6v6H8zM2 8h6v6H2zM14 8h6v6h-6zM8 14h6v6H8z" fill="#8d8d8d" />
            </Icon>
          </button>
          <button aria-label="Lock image pixels">
            <svg width="28" height="28" viewBox="2 2 32 32" aria-hidden="true" fill="#8d8d8d"><path d={BRUSH_HANDLE} /><path d={BRUSH_TIP} /></svg>
          </button>
          <button aria-label="Lock position">
            <svg width="28" height="28" viewBox="2 2 32 32" aria-hidden="true"><path d={MOVE} fill="#dedede" /></svg>
          </button>
          <button aria-label="Lock artboard nesting">
            <Icon w={28} h={24}>
              <path d="M5 3h12l6 6v12H5z" stroke="#dedede" strokeWidth="2" /><path d="M16 3v7h7z" fill="#dedede" />
              <path d="M0 3h2M5-1v2M26 3h2M23-1v2M0 21h2M5 23v2M26 21h2M23 23v2" stroke="#dedede" strokeWidth="2" />
            </Icon>
          </button>
          <button aria-label="Lock all">
            <Icon w={20} h={24}>
              <path d="M0 10h20v14H0z" fill="#dedede" /><path d="M5 11V6a5 5 0 0 1 10 0v5" stroke="#dedede" strokeWidth="2.500" />
              <circle cx="10" cy="16" r="3" fill="#4a4a4a" />
            </Icon>
          </button>
        </div>
        <label htmlFor="fill" className="ml-auto pr-1.5 text-[#c8c8c8]">Fill:</label>
        <NumberBox id="fill" value="100%" />
        <span className="w-[25px] shrink-0" />
      </div>
      <ul className="min-h-0 flex-1 border-t border-[#393939] bg-[#444] pr-7 text-[#ededed]">
        <li className="flex h-[51px] items-stretch border-b-2 border-[#393939] bg-[#4a4a4a]">
          <button aria-label="Hide Dummy text" className="grid w-[61px] place-items-center border-r-2 border-[#393939]"><Eye /></button>
          <div className="flex flex-1 items-center gap-[11px] bg-[#606060] pl-[3px]">
            <Icon w={41} h={41}>
              <path d="M1.500 14V1.500H14M27 1.500h12.500V14M39.500 27v12.500H27M14 39.500H1.500V27" stroke="#fff" strokeWidth="3" />
              <path d="M10 11h20v6h-3q0-3-3-3h-2v14h3v3H15v-3h3V14h-2q-3 0-3 3h-3z" fill="#dedede" />
            </Icon>
            Dummy text
          </div>
        </li>
        <li className="flex h-[44px] items-stretch border-b-2 border-[#393939] bg-[#4a4a4a]">
          <button aria-label="Hide Ellipse 1" className="grid w-[61px] place-items-center border-r-2 border-[#393939]"><Eye /></button>
          <div className="flex flex-1 items-center pl-[7px]">
            <Icon w={33} h={13}>
              <path d="M1 1h32v11H1z" fill="#fff" stroke="#2b2b2b" strokeWidth="2" />
              <path d="M2 4h31" stroke="#bdbdbd" strokeWidth="4" strokeDasharray="4 4" />
              <path d="M6 8.500h27" stroke="#bdbdbd" strokeWidth="4" strokeDasharray="4 4" />
            </Icon>
            <span className="mr-[15px] grid size-8 place-items-center border-2 border-[#2b2b2b]"><VectorMask /></span>
            Ellipse 1
          </div>
        </li>
        <li className="flex h-[46px] items-stretch border-b-2 border-[#393939] bg-[#4a4a4a]">
          <button aria-label="Hide Background" className="grid w-[61px] place-items-center border-r-2 border-[#393939]"><Eye /></button>
          <div className="flex flex-1 items-center gap-[15px] pl-[7px]">
            <span className="h-[13px] w-[65px] border-2 border-[#2b2b2b] bg-white" />
            Background
            <Icon w={20} h={24} className="mr-[34px] ml-auto">
              <path d="M1 9h18v14H1zM5 9V6a5 5 0 0 1 10 0v3" stroke="#dedede" strokeWidth="2" /><circle cx="10" cy="16" r="2.500" fill="#dedede" />
            </Icon>
          </div>
        </li>
      </ul>
      <div className="flex h-[50px] shrink-0 justify-end border-t-2 border-[#333] pr-[38px] pb-1 *:grid *:w-[54px] *:place-items-center">
        <button aria-label="Link layers">
          <Icon w={29} h={16}><path d="M12 4a6.500 6.500 0 1 0 0 8M17 4a6.500 6.500 0 1 1 0 8M8 8h13" stroke="#858585" strokeWidth="2.500" /></Icon>
        </button>
        <button aria-label="Layer style">
          <Icon w={24} h={24}>
            <path d="M11 1C7 0 6 3 5 8L1 24M2 8h8M9 9c4 0 5 11 10 11M21 9L8 20" stroke="#dedede" strokeWidth="2" /><path d="M22 25h7l-3.500 3.500z" fill="#fff" />
          </Icon>
        </button>
        <button aria-label="Add mask"><MaskIcon /></button>
        <button aria-label="New adjustment layer" className="relative">
          <HalfCircle />
          <Icon w={8} h={4} className="absolute right-2 bottom-1.5"><path d="M0 0h8L4 4z" fill="#fff" /></Icon>
        </button>
        <button aria-label="New group"><Icon w={24} h={20}><path d="M0 0h10l2 2H0zM0 4h24v14q0 2-2 2H2q-2 0-2-2z" fill="#dedede" /></Icon></button>
        <button aria-label="New layer"><PlusBox /></button>
        <button aria-label="Delete layer"><Trash /></button>
      </div>
    </section>
  )
}

function LibrariesPanel() {
  return (
    <section className="flex h-[394px] shrink-0 flex-col border-t-[6px] border-[#383838] bg-[#525252]">
      <PanelTabs tabs={["Libraries", "Adjustments"]} active="Libraries" />
      <label className="mt-8 mr-[22px] ml-6 flex h-[58px] shrink-0 items-center gap-[18px] border-b-2 border-[#666] pb-0.5 pl-[3px]">
        <Magnifier w={19} white />
        <input type="search" aria-label="Search all libraries" placeholder="Search all libraries" className="flex-1 bg-transparent text-[22px] italic outline-none placeholder:text-[#7c7c7c]" />
      </label>
      <button className="mt-9 ml-[26px] flex h-8 shrink-0 items-center gap-[11px] text-[23px] font-semibold text-[#dedede]">
        <Icon w={24} h={24}><path d="M12 0v24M0 12h24" stroke="#dedede" strokeWidth="4" /></Icon>
        Create new library
      </button>
      <div className="mt-6 flex min-h-0 flex-1 overflow-hidden">
        <ul className="mr-6 ml-6 flex flex-1 flex-col gap-2 text-[22px] text-[#dedede]">
          <li className="flex h-[68px] shrink-0 items-center rounded-lg bg-[#474747] pl-[18px]">My Library</li>
          <li className="flex h-[68px] shrink-0 items-center rounded-lg bg-[#474747] pl-[18px]">Stock Templates</li>
        </ul>
        <div className="w-[30px] bg-[#494949] pt-1.5 pl-1.5"><div className="h-[18px] w-5 rounded-full bg-[#6b6b6b]" /></div>
      </div>
      <div className="flex h-11 shrink-0 items-center justify-between border-t-2 border-[#474747] pr-9 pb-0.5 pl-8">
        <button aria-label="Cloud sync">
          <Icon w={32} h={20}><path d="M6 20a6 6 0 0 1-2-11q0-6 8-5c3-6 13-5 14 4 8 1 8 12 0 12z" fill="#fff" /></Icon>
        </button>
        <button aria-label="Add content">
          <Icon w={24} h={24}><path d="M12 0v24M0 12h24" stroke="#dedede" strokeWidth="4" /><path d="M22 20h8l-4 5z" fill="#dedede" /></Icon>
        </button>
      </div>
    </section>
  )
}

const channels = [
  { name: "RGB", keys: "⌘2", text: "#8b8cc2", dot: "#001489" },
  { name: "Red", keys: "⌘3", text: "#999", dot: "#111" },
  { name: "Green", keys: "⌘4", text: "#999", dot: "#1c1c1c" },
  { name: "Blue", keys: "⌘5", text: "#bbb", dot: "#888" },
]

function ChannelsPanel() {
  return (
    <section className="flex h-[284px] shrink-0 flex-col border-t-[6px] border-[#383838] bg-[#4a4a4a]">
      <PanelTabs tabs={["Channels"]} active="Channels" />
      <div className="mt-2.5 flex min-h-0 flex-1 overflow-hidden bg-[#424242]">
        <ul className="flex-1 text-[#f0f0f0]">
          {channels.map(channel => (
            <li key={channel.name} className="flex h-[46px] items-center border-b-2 border-[#444] bg-[#606060] pr-[17px] pl-[11px]">
              <button aria-label={`Hide ${channel.name}`}><Eye iris="#606060" /></button>
              <span className="mr-[9px] ml-3.5 flex h-3 w-16 items-center overflow-hidden border-2 border-[#222] bg-white pl-5 font-['Liberation_Serif',serif] text-[6px] whitespace-nowrap">
                <span style={{ color: channel.text }}>Dummy text</span>
                <span className="-mr-1 ml-auto size-1.5 shrink-0 rounded-full" style={{ backgroundColor: channel.dot }} />
              </span>
              <span className="pb-1.5">{channel.name}</span>
              <kbd className="ml-auto pb-1.5 font-['Inter','DejaVu_Sans',sans-serif]">{channel.keys}</kbd>
            </li>
          ))}
        </ul>
        <div className="w-[30px] pt-1 pl-1.5"><div className="h-[140px] w-5 rounded-full bg-[#5e5e5e]" /></div>
      </div>
      <div className="flex h-12 shrink-0 items-center border-t-2 border-[#333] pl-[231px]">
        <button aria-label="Load channel as selection">
          <Icon w={20} h={20}>
            <path d="M1 1h18v18H1z" stroke="#2e2e2e" strokeWidth="2" /><path d="M1 1h18v18H1z" stroke="#e2e2e2" strokeWidth="2" strokeDasharray="4 4" strokeDashoffset="-3" />
          </Icon>
        </button>
        <button aria-label="Save selection as channel" className="ml-9"><MaskIcon className="text-[#8d8d8d]" /></button>
        <button aria-label="New channel" className="ml-10"><PlusBox /></button>
        <button aria-label="Delete channel" className="ml-9"><Trash className="text-[#8d8d8d]" /></button>
      </div>
    </section>
  )
}

export default function App() {
  return (
    <div className="flex h-screen w-full flex-col bg-[linear-gradient(90deg,#2b3018_0,#2b3018_370px,#a8443f_380px,#7a3a30_600px,#a9c4cc_625px,#a9c4cc_670px,#3fa3ab_690px)] pt-1 font-['Inter',sans-serif] text-[20px] leading-7">
      <div className="flex min-h-0 flex-1 bg-[linear-gradient(180deg,#3a4220_0,#0e2a28_6%,#5a5a30_14%,#3c3d22_30%,#2a2412_50%,#10201a_64%,#4a3a28_74%,#1d2413_86%,#8a2f3a_95%,#35452a_100%)] bg-[length:11px_100%] bg-no-repeat pl-2.5">
        <div className="flex min-w-0 flex-1 flex-col overflow-hidden rounded-t-xl border-t-2 border-l-2 border-[#333] bg-[#4a4a4a]">
          <header className="relative flex h-11 shrink-0 items-center justify-center border-b-2 border-[#333]">
            <div className="absolute left-4 flex gap-4">
              <button aria-label="Close window" className="size-6 rounded-full bg-[#ff4f4e]" />
              <button aria-label="Minimize window" className="size-6 rounded-full bg-[#ffb335]" />
              <button aria-label="Zoom window" className="size-6 rounded-full bg-[#1dc745]" />
            </div>
            <h1 className="pt-1 text-[26px] text-[#dcdcdc]">Adobe Photoshop 2023</h1>
          </header>
          <OptionsBar />
          <div className="flex min-h-0 flex-1">
            <Toolbar />
            <Divider />
            <Workspace />
            <Divider />
            <div className="flex w-[568px] shrink-0 flex-col">
              <div className="flex h-6 shrink-0 items-center justify-between border-b-2 border-[#333] bg-[#3a3a3a] pr-2.5 pl-12">
                <DoubleChevron left />
                <DoubleChevron />
              </div>
              <div className="flex min-h-0 flex-1">
                <Dock />
                <Divider />
                <div className="flex min-w-0 flex-1 flex-col">
                  <LayersPanel />
                  <LibrariesPanel />
                  <ChannelsPanel />
                </div>
              </div>
            </div>
          </div>
        </div>
      </div>
    </div>
  )
}
